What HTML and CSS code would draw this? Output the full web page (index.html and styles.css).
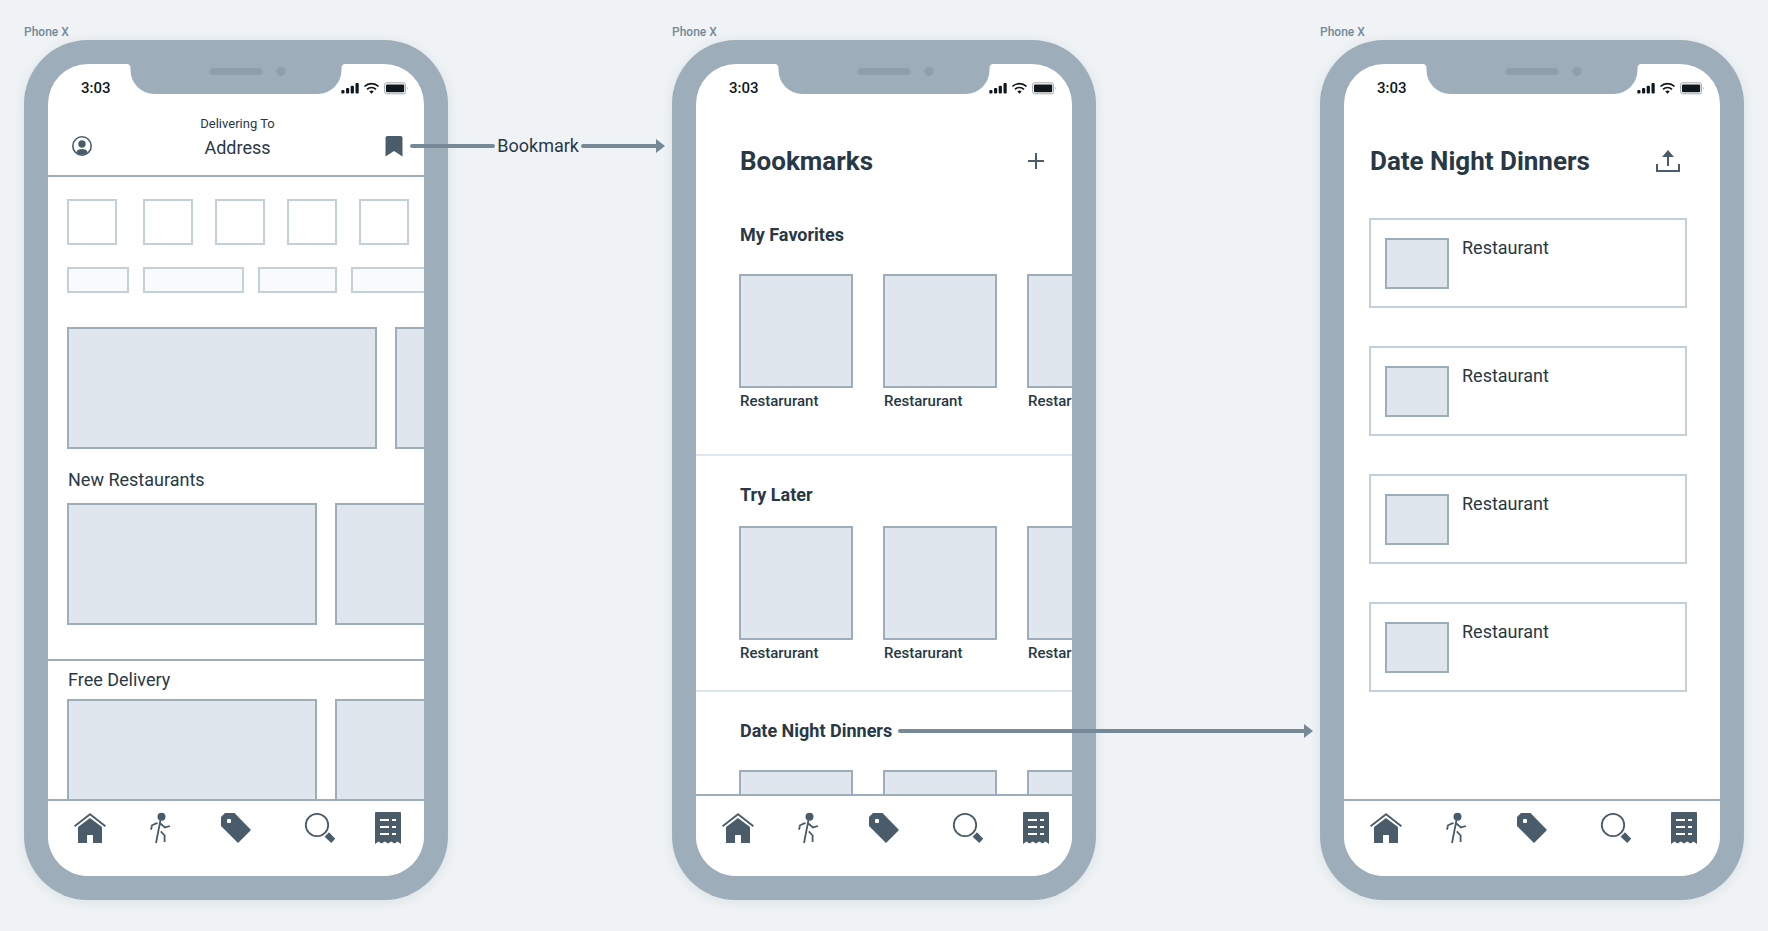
FILE: index.html
```html
<!doctype html>
<html lang="en">
<head>
<meta charset="utf-8">
<meta name="viewport" content="width=device-width, initial-scale=1">
<title>Bookmarks wireflow</title>
<link rel="stylesheet" href="styles.css">
</head>

<body>
<svg class="sprite" aria-hidden="true">
	<symbol id="notch" viewBox="0 0 219 30">
		<path class="notch-body" d="M0 0H219A4 4 0 0 0 215 4V6A24 24 0 0 1 191 30H28A24 24 0 0 1 4 6V4A4 4 0 0 0 0 0Z"/>
		<rect class="notch-part" x="83" y="4" width="53" height="7" rx="3.5"/>
		<circle class="notch-part" cx="154.400" cy="7.500" r="4.500"/>
	</symbol>
	<symbol id="status" viewBox="0 0 68 13">
		<rect x="0.300" y="8" width="3.200" height="3.500" rx="1"/>
		<rect x="5" y="6" width="3.200" height="5.500" rx="1"/>
		<rect x="9.700" y="3.700" width="3.200" height="7.800" rx="1"/>
		<rect x="14.500" y="1" width="3.200" height="10.500" rx="1"/>
		<g fill="none" stroke="currentColor" stroke-width="1.700">
			<path d="M23.400 4.500a10.300 10.300 0 0 1 14.200 0"/>
			<path d="M26 7.300a6.500 6.500 0 0 1 9 0"/>
		</g>
		<path d="M28.300 9.400a3.300 3.300 0 0 1 4.400 0L30.500 11.700Z"/>
		<rect x="43.600" y="0.800" width="21" height="11" rx="2" fill="none" stroke="#a8a6ab"/>
		<rect x="45" y="2.500" width="18.200" height="7.800" rx="1"/>
		<path d="M66 4.500q1.500 1.700 0 3.600Z" fill="#a8a6ab"/>
	</symbol>
	<symbol id="account" viewBox="0 0 20 20">
		<circle cx="10" cy="10" r="9.200" fill="none" stroke="currentColor" stroke-width="1.600"/>
		<circle cx="10" cy="8" r="3.700"/>
		<path d="M4.300 16.200Q5.500 13 10 13T15.700 16.200Q13 18.800 10 18.800T4.300 16.200Z"/>
	</symbol>
	<symbol id="bookmark" viewBox="0 0 18 21">
		<path d="M2.500 0H15.500Q17.500 0 17.500 2V20.500L9 15L0.500 20.500V2Q0.500 0 2.500 0Z"/>
	</symbol>
	<symbol id="plus" viewBox="0 0 16 16">
		<path d="M8 0V16M0 8H16" fill="none" stroke="currentColor" stroke-width="2"/>
	</symbol>
	<symbol id="share" viewBox="0 0 24 22">
		<path d="M12 6V16M1 14V21H23V14" fill="none" stroke="currentColor" stroke-width="2"/>
		<path d="M12 0L18 7H6Z"/>
	</symbol>
	<symbol id="home" viewBox="0 0 32 32">
		<path d="M0.600 14.200L16 2.200L31.400 14.200" fill="none" stroke="currentColor" stroke-width="1.800"/>
		<path d="M16 6L28 15V31H19V23H13V31H4V15Z"/>
	</symbol>
	<symbol id="walk" viewBox="0 0 32 32">
		<circle cx="17.500" cy="4.800" r="4"/>
		<path d="M16.500 8L12 31M7 17.800L8 13.300L13.500 10.900M16 11.300L21 15.400L26 14M16.800 19.300L20.600 23.500V30" fill="none" stroke="currentColor" stroke-width="1.800"/>
	</symbol>
	<symbol id="tag" viewBox="0 0 32 32">
		<path fill-rule="evenodd" d="M1 5L5 1H14.500L31 18L18 31L1 14ZM8 7Q7 7 7 8V10Q7 11 8 11H10Q11 11 11 10V8Q11 7 10 7Z"/>
	</symbol>
	<symbol id="search" viewBox="0 0 32 32">
		<circle cx="13" cy="13" r="11.200" fill="none" stroke="currentColor" stroke-width="1.800"/>
		<path d="M25 20.300L31.200 26.800L27.300 31L20.600 24.800Z"/>
	</symbol>
	<symbol id="receipt" viewBox="0 0 32 32">
		<path fill-rule="evenodd" d="M4 0H28Q29 0 29 1V32L25.500 29.500L22.500 31.500L19.200 29.500L16 31.500L12.800 29.500L9.500 31.500L6.500 29.500L3 32V1Q3 0 4 0ZM8 7V9H17V7ZM20 7V9H24V7ZM8 14V16H17V14ZM20 14V16H24V14ZM8 21V23H17V21ZM20 21V23H24V21Z"/>
	</symbol>
</svg>

<div class="board">

	<!-- home -->
	<section class="artboard">
		<p class="artboard-name">Phone X</p>
		<div class="phone">
			<div class="screen">
				<svg class="notch" width="219" height="30"><use href="#notch"/></svg>
				<div class="status">
					<time>3:03</time>
					<svg width="68" height="13"><use href="#status"/></svg>
				</div>
				<header class="address-bar">
					<button type="button" aria-label="Account"><svg width="20" height="20"><use href="#account"/></svg></button>
					<div class="address">
						<small>Delivering To</small>
						<span>Address</span>
					</div>
					<button type="button" aria-label="Bookmarks"><svg width="18" height="21"><use href="#bookmark"/></svg></button>
				</header>
				<main class="content feed">
					<div class="tiles">
						<div class="tile"></div>
						<div class="tile"></div>
						<div class="tile"></div>
						<div class="tile"></div>
						<div class="tile"></div>
					</div>
					<div class="chips">
						<div class="chip chip-s"></div>
						<div class="chip chip-l"></div>
						<div class="chip chip-m"></div>
						<div class="chip chip-l"></div>
					</div>
					<div class="banners">
						<div class="box banner banner-wide"></div>
						<div class="box banner banner-wide"></div>
					</div>
					<section class="feed-section">
						<h2>New Restaurants</h2>
						<div class="banners">
							<div class="box banner"></div>
							<div class="box banner"></div>
						</div>
					</section>
					<section class="feed-section feed-section-ruled">
						<h2>Free Delivery</h2>
						<div class="banners">
							<div class="box banner"></div>
							<div class="box banner"></div>
						</div>
					</section>
				</main>
				<nav class="tabs">
					<a href="#" aria-label="Home"><svg width="32" height="32"><use href="#home"/></svg></a>
					<a href="#" aria-label="Pickup"><svg width="32" height="32"><use href="#walk"/></svg></a>
					<a href="#" aria-label="Offers"><svg width="32" height="32"><use href="#tag"/></svg></a>
					<a href="#" aria-label="Search"><svg width="32" height="32"><use href="#search"/></svg></a>
					<a href="#" aria-label="Orders"><svg width="32" height="32"><use href="#receipt"/></svg></a>
				</nav>
			</div>
			<div class="arrow arrow-bookmark">
				<span class="line"></span>
				<span class="arrow-label">Bookmark</span>
				<span class="line line-end"></span>
			</div>
		</div>
	</section>

	<!-- bookmarks -->
	<section class="artboard">
		<p class="artboard-name">Phone X</p>
		<div class="phone">
			<div class="screen">
				<svg class="notch" width="219" height="30"><use href="#notch"/></svg>
				<div class="status">
					<time>3:03</time>
					<svg width="68" height="13"><use href="#status"/></svg>
				</div>
				<header class="title-bar title-bar-bookmarks">
					<h1>Bookmarks</h1>
					<button type="button" aria-label="Add list"><svg width="16" height="16"><use href="#plus"/></svg></button>
				</header>
				<main class="content shelves">
					<section class="shelf">
						<h2>My Favorites</h2>
						<div class="shelf-row">
							<figure><div class="box cover"></div><figcaption>Restarurant</figcaption></figure>
							<figure><div class="box cover"></div><figcaption>Restarurant</figcaption></figure>
							<figure><div class="box cover"></div><figcaption>Restarurant</figcaption></figure>
						</div>
					</section>
					<section class="shelf shelf-compact">
						<h2>Try Later</h2>
						<div class="shelf-row">
							<figure><div class="box cover"></div><figcaption>Restarurant</figcaption></figure>
							<figure><div class="box cover"></div><figcaption>Restarurant</figcaption></figure>
							<figure><div class="box cover"></div><figcaption>Restarurant</figcaption></figure>
						</div>
					</section>
					<section class="shelf">
						<h2>Date Night Dinners</h2>
						<div class="shelf-row">
							<figure><div class="box cover"></div></figure>
							<figure><div class="box cover"></div></figure>
							<figure><div class="box cover"></div></figure>
						</div>
					</section>
				</main>
				<nav class="tabs tabs-tall">
					<a href="#" aria-label="Home"><svg width="32" height="32"><use href="#home"/></svg></a>
					<a href="#" aria-label="Pickup"><svg width="32" height="32"><use href="#walk"/></svg></a>
					<a href="#" aria-label="Offers"><svg width="32" height="32"><use href="#tag"/></svg></a>
					<a href="#" aria-label="Search"><svg width="32" height="32"><use href="#search"/></svg></a>
					<a href="#" aria-label="Orders"><svg width="32" height="32"><use href="#receipt"/></svg></a>
				</nav>
			</div>
			<div class="arrow arrow-list">
				<span class="line line-end"></span>
			</div>
		</div>
	</section>

	<!-- single list -->
	<section class="artboard">
		<p class="artboard-name">Phone X</p>
		<div class="phone">
			<div class="screen">
				<svg class="notch" width="219" height="30"><use href="#notch"/></svg>
				<div class="status">
					<time>3:03</time>
					<svg width="68" height="13"><use href="#status"/></svg>
				</div>
				<header class="title-bar title-bar-list">
					<h1>Date Night Dinners</h1>
					<button type="button" aria-label="Share"><svg width="24" height="22"><use href="#share"/></svg></button>
				</header>
				<main class="content">
					<ul class="list">
						<li><div class="box thumb"></div><span>Restaurant</span></li>
						<li><div class="box thumb"></div><span>Restaurant</span></li>
						<li><div class="box thumb"></div><span>Restaurant</span></li>
						<li><div class="box thumb"></div><span>Restaurant</span></li>
					</ul>
				</main>
				<nav class="tabs">
					<a href="#" aria-label="Home"><svg width="32" height="32"><use href="#home"/></svg></a>
					<a href="#" aria-label="Pickup"><svg width="32" height="32"><use href="#walk"/></svg></a>
					<a href="#" aria-label="Offers"><svg width="32" height="32"><use href="#tag"/></svg></a>
					<a href="#" aria-label="Search"><svg width="32" height="32"><use href="#search"/></svg></a>
					<a href="#" aria-label="Orders"><svg width="32" height="32"><use href="#receipt"/></svg></a>
				</nav>
			</div>
		</div>
	</section>

</div>
</body>
</html>
```
FILE: styles.css
```css
*{ margin:0; padding:0; box-sizing:border-box; list-style:none;}
body{ background:#eff3f6; color:#293845; font-family:Roboto,"Liberation Sans",sans-serif; font-size:18px; line-height:24px;}
svg{ display:block; fill:currentColor;}
button{ border:0; background:none; color:#4a5c6a; cursor:pointer;}
.sprite{ position:absolute; width:0; height:0;}

/* board */
.board{ display:grid; grid-template-columns:repeat(3,minmax(0,1fr)); grid-template-rows:minmax(0,1fr); gap:224px; height:100vh; padding:24px 24px 31px;}
.artboard{ display:flex; flex-direction:column; min-height:0;}
.artboard-name{ font-size:12px; line-height:16px; font-weight:500; color:#768999;}
.phone{ flex:1; min-height:0; position:relative; padding:24px; border-radius:64px; background:#9dadb9; box-shadow:0 2px 12px rgba(41,56,69,.1);}
.screen{ position:relative; display:flex; flex-direction:column; height:100%; border-radius:40px; background:#fff; overflow:hidden;}
.content{ flex:1; min-height:0; overflow:hidden;}

/* notch and status bar */
.notch{ position:absolute; top:0; left:50%; transform:translateX(-50%);}
.notch-body{ fill:#9dadb9;}
.notch-part{ fill:#8e9eac;}
.status{ flex:none; display:flex; justify-content:space-between; align-items:center; height:48px; padding:0 15px 0 33px; color:#10181f;}
.status time{ font-size:15px; font-weight:500;}

/* placeholders */
.box{ flex:none; border:2px solid #9dadb9; background:#dfe6ed;}

/* home */
.address-bar{ flex:none; display:grid; grid-template-columns:1fr auto 1fr; align-items:end; padding:4px 21px 15px 24px; border-bottom:2px solid #9dadb9;}
.address-bar button{ height:24px; display:flex; align-items:flex-start; justify-self:start;}
.address-bar button:last-child{ justify-self:end;}
.address{ display:flex; flex-direction:column; align-items:center; gap:4px;}
.address small{ font-size:13px; line-height:16px;}
.feed{ padding:22px 0 0 19px;}
.feed h2{ padding-left:1px; font-size:18px; font-weight:400;}
.tiles{ display:grid; grid-template-columns:54px repeat(4,50px); gap:22px; margin-bottom:22px;}
.tile{ width:50px; height:46px; border:2px solid #c3d0da;}
.chips{ display:flex; gap:14px; margin-bottom:34px;}
.chip{ flex:none; height:26px; border:2px solid #c3d0da; background:#f8fafc;}
.chip-s{ width:62px;}
.chip-m{ width:79px;}
.chip-l{ width:101px;}
.banners{ display:flex; gap:18px;}
.banner{ width:250px; height:122px;}
.banner-wide{ width:310px;}
.feed-section{ padding:19px 0 34px;}
.feed-section h2{ margin-bottom:11px;}
.feed-section-ruled{ margin-left:-19px; padding:7px 0 0 19px; border-top:2px solid #9dadb9;}
.feed-section-ruled h2{ margin-bottom:7px;}

/* title bars */
.title-bar{ flex:none; display:flex; justify-content:space-between; align-items:center; padding-top:33px;}
.title-bar h1{ font-size:26px; line-height:32px; font-weight:700;}
.title-bar-bookmarks{ padding-left:44px; padding-right:28px;}
.title-bar-list{ padding-left:26px; padding-right:40px;}

/* bookmarks */
.shelves{ padding-top:19px;}
.shelf{ padding:27px 0 43px 43px;}
.shelf + .shelf{ border-top:2px solid #dfe6ed;}
.shelf h2{ margin-bottom:27px; padding-left:1px; font-size:18px; font-weight:700;}
.shelf-compact{ padding-bottom:27px;}
.shelf-compact h2{ margin-bottom:19px;}
.shelf-row{ display:flex; gap:30px;}
.cover{ width:114px; height:114px;}
.shelf figcaption{ margin-top:3px; padding-left:1px; font-size:15px; line-height:20px; font-weight:500;}

/* list */
.list{ display:flex; flex-direction:column; gap:38px; padding:41px 33px 0 25px;}
.list li{ display:flex; gap:13px; padding:18px 14px 17px; border:2px solid #c3d0da; line-height:20px;}
.thumb{ width:64px; height:51px;}

/* tab bar, columns follow the uneven icon spacing */
.tabs{ flex:none; display:grid; grid-template-columns:84fr 55fr 98fr 70fr 66fr; padding:11px 3px 32px 0; border-top:2px solid #9dadb9; background:#fff;}
.tabs-tall{ padding-top:16px;}
.tabs a{ display:flex; justify-content:center; color:#4a5c6a;}

/* flow arrows, laid over the phones */
.arrow{ position:absolute; right:-217px; display:flex; align-items:center; gap:2px; height:24px;}
.arrow-bookmark{ top:94px; width:255px;}
.arrow-list{ top:679px; left:226px;}
.line{ flex:16; height:4px; border-radius:2px; background:#768999;}
.line-end{ flex:15; position:relative; margin-right:4px;}
.line-end::after{ content:""; position:absolute; top:-5px; right:-4px; border:7px solid transparent; border-left:9px solid #768999; border-right:0;}
```
